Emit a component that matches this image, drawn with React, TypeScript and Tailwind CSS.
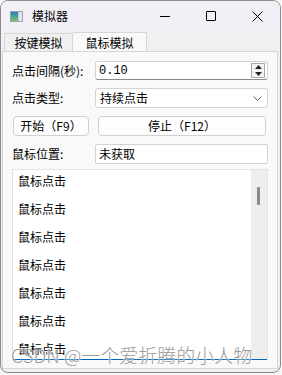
import React from "react";

const F = { fontFamily: '"Noto Sans CJK SC", "Noto Sans", sans-serif' } as React.CSSProperties;

export default function App() {
  const items = Array.from({ length: 7 }, () => "鼠标点击");
  return (
    <div className="w-[282px] h-[375px] bg-[#f6f6f6] relative overflow-hidden text-[12px] text-black" style={F}>
      <div className="w-[281px] h-[373px] rounded-[8px] border border-[#8c8c8c] bg-[#f0f0f0] flex flex-col overflow-hidden">
        {/* title bar */}
        <div className="h-[30px] bg-[#f3eff7] flex items-center shrink-0">
          <div className="ml-[9px] w-[13px] h-[11px] border border-[#9aa4b0] bg-[#e8eef4] flex">
            <div className="w-[7px] h-full bg-gradient-to-b from-[#2d78c8] via-[#4da58a] to-[#7cc06a]" />
            <div className="w-[1px] h-full bg-[#c7ccd3]" />
            <div className="flex-1 bg-[#dfe6ee]" />
          </div>
          <span className="ml-[9px] text-[12px] leading-none">模拟器</span>
          <div className="ml-auto flex items-center h-full">
            <div className="w-[46px] h-full flex items-center justify-center">
              <div className="w-[10px] h-[1px] bg-black" />
            </div>
            <div className="w-[46px] h-full flex items-center justify-center">
              <div className="w-[10px] h-[10px] border border-black rounded-[1px]" />
            </div>
            <div className="w-[46px] h-full flex items-center justify-center">
              <svg width="11" height="11" viewBox="0 0 11 11">
                <path d="M0.5 0.5 L10.5 10.5 M10.5 0.5 L0.5 10.5" stroke="black" strokeWidth="1" />
              </svg>
            </div>
          </div>
        </div>
        {/* tabs */}
        <div className="flex-1 flex flex-col px-[1px] pr-[2px] pb-[3px] min-h-0">
          <div className="flex items-end h-[20px] pl-[2px] shrink-0">
            <div className="h-[18px] w-[69px] border border-[#d6d6d6] border-b-0 bg-[#f0f0f0] flex items-center justify-center text-[12px] leading-none">
              按键模拟
            </div>
            <div className="h-[20px] w-[74px] border border-[#d6d6d6] border-b-0 border-l-0 bg-[#f9f9f9] flex items-center justify-center text-[12px] leading-none relative top-[1px]">
              鼠标模拟
            </div>
          </div>
          <div className="flex-1 border border-[#d6d6d6] bg-[#f9f9f9] flex flex-col pl-[9px] pr-[9px] pt-[9px] min-h-0 relative">
            {/* row 1 */}
            <div className="flex items-center h-[19px]">
              <span className="w-[83px] leading-none">点击间隔(秒):</span>
              <div className="flex-1 h-[19px] bg-white border border-[#d3d3d3] border-b-[#8a8a8a] rounded-[3px] flex items-center pl-[3px] pr-[2px]">
                <span className="flex-1 leading-none" style={{ fontFamily: '"Liberation Mono", monospace' }}>0.10</span>
                <div className="w-[14px] h-[15px] border border-[#a8a8a8] bg-[#f4f4f4] flex flex-col items-center justify-center gap-[3px]">
                  <svg width="7" height="4" viewBox="0 0 7 4"><path d="M3.5 0 L7 4 L0 4 Z" fill="#222" /></svg>
                  <svg width="7" height="4" viewBox="0 0 7 4"><path d="M0 0 L7 0 L3.5 4 Z" fill="#222" /></svg>
                </div>
              </div>
            </div>
            {/* row 2 */}
            <div className="flex items-center h-[20px] mt-[8px]">
              <span className="w-[83px] leading-none">点击类型:</span>
              <div className="flex-1 h-[20px] bg-white border border-[#d3d3d3] rounded-[3px] flex items-center pl-[4px] pr-[5px]">
                <span className="flex-1 leading-none">持续点击</span>
                <svg width="9" height="5" viewBox="0 0 9 5"><path d="M0.5 0.5 L4.5 4.5 L8.5 0.5" stroke="#666" strokeWidth="1" fill="none" /></svg>
              </div>
            </div>
            {/* row 3 */}
            <div className="flex items-center h-[20px] mt-[8px] gap-[9px]">
              <div className="w-[76px] ml-[1px] h-[20px] bg-[#fdfdfd] border border-[#d0d0d0] rounded-[4px] flex items-center justify-center leading-none">
                开始（F9）
              </div>
              <div className="flex-1 mr-[2px] h-[20px] bg-[#fdfdfd] border border-[#d0d0d0] rounded-[4px] flex items-center justify-center leading-none">
                停止（F12）
              </div>
            </div>
            {/* row 4 */}
            <div className="flex items-center h-[20px] mt-[8px]">
              <span className="w-[83px] leading-none">鼠标位置:</span>
              <div className="flex-1 h-[20px] bg-white border border-[#d3d3d3] rounded-[2px] flex items-center pl-[3px]">
                <span className="leading-none">未获取</span>
              </div>
            </div>
            {/* list */}
            <div className="mt-[5px] flex-1 min-h-0 border border-[#e2e2e2] border-b-0 bg-white flex relative mb-[8px]">
              <div className="flex-1 flex flex-col overflow-hidden pl-[5px]">
                {items.map((t, i) => (
                  <div key={i} className="h-[28px] shrink-0 pt-[3px] leading-[16px]">{t}</div>
                ))}
              </div>
              <div className="w-[16px] bg-[#eeeeee] relative">
                <div className="absolute left-[6px] top-[17px] w-[3px] h-[18px] bg-[#8a8a8a] rounded-[1px]" />
              </div>
              <div className="absolute left-0 right-0 bottom-0 h-[1px] bg-[#0067c0]" />
            </div>
          </div>
        </div>
      </div>
      {/* watermark */}
      <div
        className="absolute left-[11px] top-[343px] text-[19px] leading-[24px] text-[#8f8f8f] whitespace-nowrap pointer-events-none"
        style={{ fontFamily: '"Noto Sans CJK SC", sans-serif', fontWeight: 300, textShadow: "0 0 2px #fff, 0 0 1px #fff", opacity: 0.9 }}
      >
        CSDN @一个爱折腾的小人物
      </div>
    </div>
  );
}
